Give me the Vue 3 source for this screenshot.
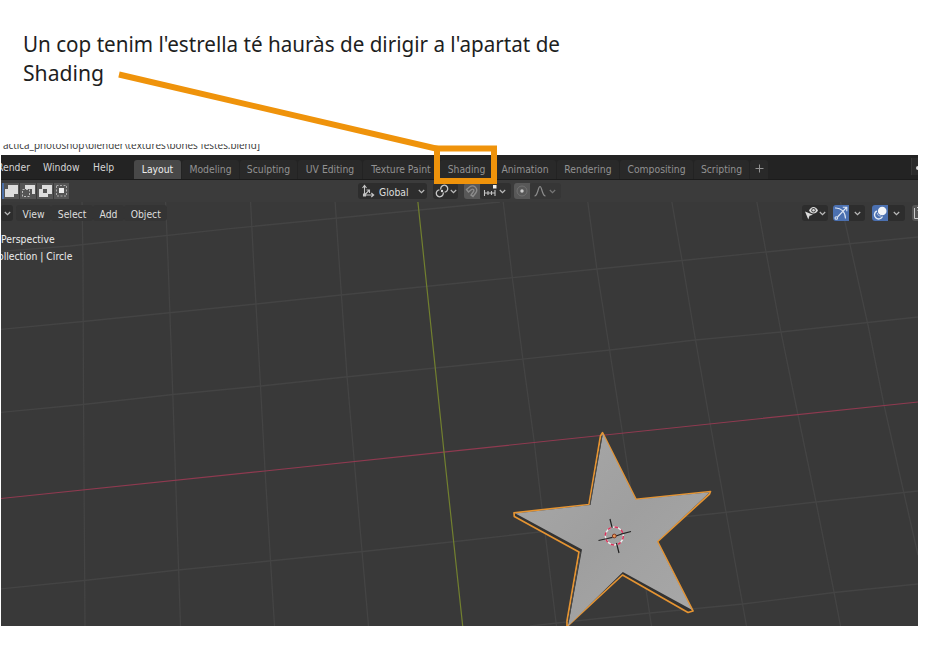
<script setup>
const menus = [
  { label: 'Render', w: 42 },
  { label: 'Window', w: 50 },
  { label: 'Help', w: 38 },
]
const tabs = ['Layout', 'Modeling', 'Sculpting', 'UV Editing', 'Texture Paint', 'Shading', 'Animation', 'Rendering', 'Compositing', 'Scripting']
const viewMenus = ['View', 'Select', 'Add', 'Object']

const gridLines = [
  '82,200 83,260 83.5,400 85,626',
  '165.5,200 168,260 173,400 180.5,626',
  '250.5,200 253.5,260 260.5,386 265,470 274.5,626',
  '335,200 339,260 347,376 355,470 368.5,626',
  '503,200 512.6,280 523,360 534,440 541,500 556.5,626',
  '587.5,200 597,270 609.6,350 622,430 651.5,626',
  '671.5,200 682,260 695.5,340 709.5,420 726,512 746.5,626',
  '756.5,200 766,252 781,332 798,415 816,502 834,592 840.5,626',
  '840,200 845,222 868,325 884,405 910,520 918,555',
  '0,251.5 70,246 230,228.6 460,206 500,202',
  '0,329.5 83,321.5 167,313 256,304 341,295 460,283 597,269 682,260.5 766,252 918,237',
  '0,412.5 83,404.5 173,394.5 261,386 345,377 460,365.5 610,350 695,340 781,332 918,317',
  '0,589 84,580.5 178,570 269,561 363,551.5 460,541 530,533 720,513 816,502 918,491',
  '530,626 645,613.5 743,604 834,592.5 918,584',
]
</script>

<template>
  <main class="page">
    <svg class="heading" width="600" height="100" viewBox="0 0 600 100">
      <text x="23" y="52" textLength="537" lengthAdjust="spacingAndGlyphs">Un cop tenim l'estrella té hauràs de dirigir a l'apartat de</text>
      <text x="23" y="81" textLength="81" lengthAdjust="spacingAndGlyphs">Shading</text>
    </svg>

    <section class="window">
      <svg class="title" width="300" height="11" viewBox="0 0 300 11">
        <text x="2" y="5" textLength="257" lengthAdjust="spacingAndGlyphs">actica_photoshop\blender\textures\bones festes.blend]</text>
      </svg>

      <header class="topbar">
        <nav class="menus">
          <span v-for="m in menus" :key="m.label" :style="{ width: m.w + 'px' }">{{ m.label }}</span>
        </nav>
        <nav class="tabs">
          <span v-for="(t, i) in tabs" :key="t" class="tab" :class="{ active: i === 0 }">{{ t }}</span>
          <span class="tab add"><svg width="9" height="9" viewBox="0 0 9 9"><path d="M4.5 .5v8M.5 4.5h8" stroke="#929292" /></svg></span>
        </nav>
        <div class="scene"><i></i></div>
      </header>

      <div class="viewport">
        <svg class="canvas" width="917" height="446" viewBox="1 180 917 446">
          <defs>
            <linearGradient id="face" x1="0" y1="0" x2="1" y2="1">
              <stop offset="0" stop-color="#a9a9a9" />
              <stop offset=".5" stop-color="#9f9f9f" />
              <stop offset="1" stop-color="#a9a9a9" />
            </linearGradient>
          </defs>
          <g fill="none" stroke="#444" stroke-width="1.3">
            <polyline v-for="(l, i) in gridLines" :key="i" :points="l" />
          </g>
          <path d="M0 498.6 265 471 460 450.3 918 402" fill="none" stroke="#8f3a50" stroke-width="1.2" />
          <path d="M417.8 201 424 260 444 452 462.7 626" fill="none" stroke="#72802f" stroke-width="1.2" />

          <path d="M602.5 432.7 636 499.3 710.5 491.5 709.5 494 657.5 541.5 693 611 688 612.5 622.5 575 567 626.5 567 621 579 552 514.3 516.5 514 512.8 589 504.5 600.5 436Z" fill="#333" stroke="#e59432" stroke-width="1.7" stroke-linejoin="round" />
          <path d="M602.8 433.8 635.7 499.8 709.8 492.2 657 541.5 691.8 609.8 622.8 572 568 626 582 549.5 515.5 513.4 590.3 505.1Z" fill="url(#face)" />
          <path d="M602 436 590 505M580.5 552 568.3 622" stroke="#4b4a48" fill="none" />

          <g fill="none">
            <circle cx="614.3" cy="536" r="9" stroke="#eee" stroke-width="1.4" />
            <circle cx="614.3" cy="536" r="9" stroke="#d8335a" stroke-width="1.5" stroke-dasharray="3.534 3.534" />
            <path d="M610 519l2.2 9M616.5 543l2.5 10M598.5 540.5l9-2M621 534.2l10-2.7M607.5 538.500l5-1.2M616 536l5-1.8" stroke="#222" stroke-width="1.2" />
            <circle cx="614.3" cy="536" r="1.9" fill="#ed9a58" stroke="#67200f" stroke-width=".8" />
          </g>
        </svg>

        <div class="tool-header">
          <div class="select-modes">
            <svg width="67" height="16" viewBox="0 0 67 16">
              <path d="M0 0h17v16H0zM18 0h16v16H18zM35 0h16v16H35zM52 0h15v16H52z" fill="#555" />
              <path d="M0 0h2v16H0z" fill="#4a6fa8" />
              <path d="M6 2h10v9h-4v3H3V6h3z" fill="#ddd" />
              <path d="M23 2h10v9h-3V6h-7z" fill="#ddd" />
              <path d="M20.500 6.500h7v7h-7z" fill="none" stroke="#bbb" stroke-dasharray="2 1.5" />
              <path d="M40 2h10v9h-4v3h-9V6h3zm1 4v4h4V6z" fill="#ddd" fill-rule="evenodd" />
              <path d="M57 5h5v5h-5z" fill="#eee" />
              <path d="M54.5 2.5h10v10.5h-10z" fill="none" stroke="#aaa" stroke-dasharray="2 1.5" />
            </svg>
          </div>
          <div class="transform box">
            <svg width="14" height="14" viewBox="0 0 14 14" fill="none" stroke="#c4c4c4" stroke-width="1.1">
              <path d="M3.5 2v9H12M1.5 4l2-2.5 2 2.5M10.3 9l2.4 2-2.4 2M3.5 11l4.5-4.5M5.500 6h3v3" />
              <path d="M2.5 10h2v2h-2z" fill="#c4c4c4" />
            </svg>
            <span>Global</span>
            <svg class="chev" width="7" height="5" viewBox="0 0 7 5"><path d="M.8 1l2.7 2.7L6.2 1" /></svg>
          </div>
          <div class="pivot box">
            <svg width="14" height="14" viewBox="0 0 14 14" fill="none" stroke="#c8c8c8" stroke-width="1.3">
              <path d="M5.800 5.500A3.500 3.500 0 1 1 9.600 8.200M8.200 8.500A3.500 3.500 0 1 1 4.400 5.800" />
              <circle cx="7" cy="7" r="1.2" fill="#ddd" stroke="none" />
            </svg>
            <svg class="chev" width="7" height="5" viewBox="0 0 7 5"><path d="M.8 1l2.7 2.7L6.2 1" /></svg>
          </div>
          <div class="snap">
            <div class="toggle">
              <svg width="14" height="14" viewBox="0 0 14 14" fill="none" stroke="#8b8b8b" stroke-width="1.4">
                <path d="M1.500 5.500 4.500 3C8.500 0 13.500 4 11 8.500L8 12.500 6 11 8.500 7.500C9.500 6 8 4.500 6.500 5.500L3.500 8Z" />
              </svg>
            </div>
            <div class="box snap-to">
              <svg width="14" height="14" viewBox="0 0 14 14" fill="none" stroke="#c4c4c4" stroke-width="1.1">
                <path d="M1.5 6v6M5 7v4M8.5 7v4M12 6v6M1.5 9H12" />
                <path d="M10 1h3.5v3.5H10z" fill="#eee" stroke="none" />
              </svg>
              <svg class="chev" width="7" height="5" viewBox="0 0 7 5"><path d="M.8 1l2.7 2.7L6.2 1" /></svg>
            </div>
          </div>
          <div class="snap">
            <div class="toggle">
              <svg width="14" height="14" viewBox="0 0 14 14" fill="none"><circle cx="7" cy="7" r="5" stroke="#707070" /><circle cx="7" cy="7" r="1.7" fill="#ccc" /></svg>
            </div>
            <div class="box falloff">
              <svg width="14" height="14" viewBox="0 0 14 14" fill="none" stroke="#8d8d8d" stroke-width="1.2">
                <path d="M1.5 12C5 12 5 2.5 7 2.5S9 12 12.5 12" />
              </svg>
              <svg class="chev dim" width="7" height="5" viewBox="0 0 7 5"><path d="M.8 1l2.7 2.7L6.2 1" /></svg>
            </div>
          </div>
        </div>

        <div class="view-header">
          <div class="mode box"><svg class="chev" width="7" height="5" viewBox="0 0 7 5"><path d="M.8 1l2.7 2.7L6.2 1" /></svg></div>
          <nav class="view-menus"><span v-for="m in viewMenus" :key="m">{{ m }}</span></nav>
          <div class="displays">
            <div class="box visibility">
              <svg width="15" height="15" viewBox="0 0 15 15">
                <path d="M5 4.5C7-.2 12-.2 14 4.500 12 8.500 7 8.500 5 4.500Z" fill="#ddd" />
                <circle cx="9.500" cy="4.300" r="2.200" fill="#444" /><circle cx="9.500" cy="4.300" r="1.200" fill="#ddd" />
                <path d="M1 5.500l8 3.300-3.500 1L4.300 13.500z" fill="#ddd" />
              </svg>
              <svg class="chev" width="7" height="5" viewBox="0 0 7 5"><path d="M.8 1l2.7 2.7L6.2 1" /></svg>
            </div>
            <div class="box gizmo">
              <svg class="blue" width="16" height="16" viewBox="0 0 16 16" fill="none" stroke="#dbe4f2" stroke-width="1.1">
                <path d="M2 3c6-.5 10.500 4 10.500 10.500M4.500 12l9-9.500M9.800 2.200h4v4" /><circle cx="3.300" cy="13" r="1.300" />
              </svg>
              <svg class="chev" width="7" height="5" viewBox="0 0 7 5"><path d="M.8 1l2.7 2.7L6.2 1" /></svg>
            </div>
            <div class="box overlay">
              <svg class="blue" width="16" height="16" viewBox="0 0 16 16" fill="none">
                <circle cx="10.2" cy="6" r="4.3" fill="#f2f4f8" />
                <path d="M4.800 6A4.200 4.200 0 1 0 10.500 11.500" stroke="#e4ebf5" stroke-width="1.400" />
                <path d="M5.500 8c0 2 1 3 3.500 3" stroke="#b9c9e4" />
              </svg>
              <svg class="chev" width="7" height="5" viewBox="0 0 7 5"><path d="M.8 1l2.7 2.7L6.2 1" /></svg>
            </div>
            <div class="xray"><svg width="16" height="16" viewBox="0 0 16 16" fill="none" stroke="#ccc"><path d="M5 2.500h10M2.500 3v10.500H12M5.500 5.500H12v8" /></svg></div>
          </div>
        </div>

        <div class="info"><span>Perspective</span><span class="collection">ollection | Circle</span></div>
      </div>
    </section>

    <svg class="callout" width="935" height="200" viewBox="0 0 935 200" fill="none" stroke="#ef930b" stroke-width="6">
      <path d="M119 74.5 438 149" />
      <path d="M437 148.5h57v32.5h-57z" />
    </svg>
  </main>
</template>

<style>
body { margin: 0; background: #fff; }
</style>

<style scoped>
.page { position: relative; width: 935px; height: 656px; overflow: hidden; background: #fff; font: 10.3px/14px "DejaVu Sans Condensed", "DejaVu Sans", sans-serif; font-stretch: condensed; }
svg { display: block; flex: none; }
.heading { width: 600px; height: 100px; margin-bottom: 44px; overflow: visible; }
.heading text { font: 21.5px "Noto Sans", sans-serif; fill: #1e1e1e; }
.window { width: 917px; height: 482px; margin-left: 1px; overflow: hidden; }
.title { overflow: hidden; }
.title text { font: 10.5px "Open Sans", sans-serif; fill: #333; }
.topbar { display: flex; height: 25px; background: #232323; box-sizing: border-box; border-bottom: 1px solid #1b1b1b; color: #d6d6d6; }
.menus { display: flex; width: 133px; padding-top: 5px; box-sizing: border-box; white-space: nowrap; }
.menus span { flex: none; }
.menus span:first-child { text-indent: -4px; }
.tabs { display: grid; grid-template-columns: 47px 57px 57px 64px 76px 53px 62px 62px 73px 55px 18px; column-gap: 1px; padding-top: 5px; height: 19px; }
.tab { display: flex; align-items: center; justify-content: center; box-sizing: border-box; padding-bottom: 2px; background: #292929; color: #929292; white-space: nowrap; border-radius: 3px 3px 0 0; }
.tab.active { background: #484848; color: #ececec; }
.scene { width: 6px; height: 17px; margin: 3px 0 0 auto; background: #2b2b2b; border-left: 1px solid #363636; }
.scene i { display: block; width: 3px; height: 4px; margin: 8px 0 0 4px; border-radius: 2px 0 0 2px; background: #ddd; }
.viewport { position: relative; height: 446px; background: #393939; color: #dedede; }
.canvas { position: absolute; inset: 0; }
.tool-header, .view-header, .info { position: relative; }
.tool-header { display: flex; align-items: center; height: 22px; background: #3b3b3b; }
.select-modes { width: 357px; padding-left: 1px; box-sizing: border-box; }
.box { display: flex; align-items: center; height: 16px; background: #2d2d2d; border-radius: 3px; box-sizing: border-box; }
.chev { fill: none; stroke: #bbb; stroke-width: 1.2; }
.chev.dim { stroke: #777; }
.transform { width: 69px; padding-left: 3px; margin-right: 6px; }
.transform span { width: 39px; margin-left: 4px; padding-top: 2px; flex: none; }
.pivot { width: 25px; padding-left: 2px; gap: 1px; margin-right: 6px; }
.snap { display: flex; margin-right: 3px; }
.toggle { width: 16px; height: 16px; display: grid; place-items: center; background: #585858; border-radius: 3px 0 0 3px; }
.snap-to { width: 31px; padding-left: 3px; gap: 2px; background: #303030; }
.falloff { width: 31px; padding-left: 3px; gap: 2px; background: #363636; }
.view-header { display: flex; align-items: center; height: 22px; }
.mode { width: 12px; padding-left: 3px; margin-right: 3px; }
.view-menus { display: flex; }
.view-menus span { padding: 2px 6.6px 0; background: #343434; border-radius: 3px; }
.displays { display: flex; margin-left: auto; }
.visibility { width: 26px; padding-left: 2px; margin-right: 5px; }
.gizmo { width: 32px; gap: 5px; margin-right: 7px; }
.overlay { width: 33px; gap: 5px; margin-right: 7px; }
.blue { background: #4b70b0; border-radius: 3px 0 0 3px; }
.xray { width: 6px; overflow: hidden; background: #555; border-radius: 3px 0 0 3px; }
.info { display: flex; flex-direction: column; gap: 3.5px; margin-top: 7.5px; color: #eee; }
.collection { margin-left: -3px; }
.callout { position: absolute; left: 0; top: 0; }
</style>
